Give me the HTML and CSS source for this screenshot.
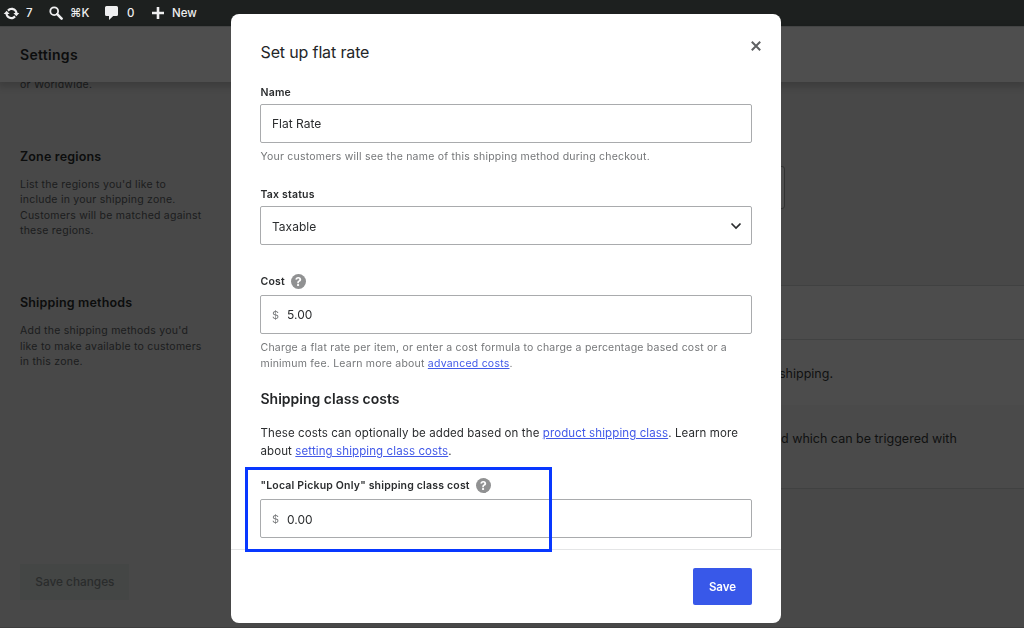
FILE: index.html
```html
<!DOCTYPE html>
<html lang="en">
<head>
<meta charset="utf-8">
<title>Settings</title>
<link rel="stylesheet" href="styles.css">
</head>
<body>
<div class="page">
  <nav class="adminbar">
    <span class="bar-item updates"><svg width="17" height="17" viewBox="0 0 20 20"><path fill="currentColor" d="M10.2 3.28c3.53 0 6.43 2.61 6.92 6h2.08l-3.5 4-3.5-4h2.32c-.45-1.97-2.21-3.45-4.32-3.45-1.45 0-2.73.71-3.54 1.78L4.95 5.66C6.23 4.2 8.11 3.28 10.2 3.28zm-.4 13.44c-3.52 0-6.43-2.61-6.92-6H.8l3.5-4 3.5 4H5.48c.45 1.97 2.21 3.45 4.32 3.45 1.45 0 2.73-.71 3.54-1.78l1.71 1.95c-1.28 1.46-3.15 2.38-5.25 2.38z"/></svg><span>7</span></span>
    <span class="bar-item search"><svg width="14" height="14" viewBox="0 0 14 14" fill="none" stroke="currentColor"><circle cx="5.2" cy="5.2" r="3.9" stroke-width="1.8"/><path d="M8.2 8.2l4.4 4.4" stroke-width="2.6" stroke-linecap="round"/></svg><span class="keys">⌘K</span></span>
    <span class="bar-item comments"><svg width="13" height="14" viewBox="0 0 13 14"><path d="M1.5 0h10Q13 0 13 1.5v7Q13 10 11.500 10H8.200L4 14v-4H1.500Q0 10 0 8.500v-7Q0 0 1.500 0z" fill="currentColor"/></svg><span>0</span></span>
    <span class="bar-item new"><svg width="12" height="12" viewBox="0 0 12 12"><path d="M6 0v12M0 6h12" stroke="currentColor" stroke-width="2.600"/></svg><span>New</span></span>
  </nav>
  <header class="page-header"><h1>Settings</h1></header>
  <main class="content">
    <aside class="side">
      <p class="side-text">or Worldwide.</p>
      <h2 class="zone-title">Zone regions</h2>
      <p class="side-text">List the regions you'd like to<br>include in your shipping zone.<br>Customers will be matched against<br>these regions.</p>
      <h2 class="methods-title">Shipping methods</h2>
      <p class="side-text">Add the shipping methods you'd<br>like to make available to customers<br>in this zone.</p>
      <button class="save-changes">Save changes</button>
    </aside>
    <section class="settings">
      <div class="region-picker"></div>
      <div class="methods-table">
        <div class="table-head"></div>
        <div class="table-row flat">shipping.</div>
        <div class="table-row free">d which can be triggered with</div>
      </div>
    </section>
  </main>
</div>

<div class="modal">
  <div class="modal-header">
    <h2>Set up flat rate</h2>
    <svg class="close" width="10" height="10" viewBox="0 0 10 10"><path d="M.8.8l8.400 8.400M9.200.8L.8 9.200" stroke="currentColor" stroke-width="2"/></svg>
  </div>
  <div class="modal-body">
    <label class="label"><span>Name</span></label>
    <div class="field name-field">Flat Rate</div>
    <p class="help">Your customers will see the name of this shipping method during checkout.</p>
    <label class="label tax-label"><span>Tax status</span></label>
    <div class="field select-field"><span>Taxable</span><svg width="12" height="8" viewBox="0 0 12 8"><path d="M1.500 1.500L6 6l4.500-4.500" fill="none" stroke="currentColor" stroke-width="1.700"/></svg></div>
    <label class="label cost-label"><span>Cost</span><span class="tip">?</span></label>
    <div class="field cost-field"><span class="currency">$</span>5.00</div>
    <p class="help cost-help">Charge a flat rate per item, or enter a cost formula to charge a percentage based cost or a<br>minimum fee. Learn more about <a>advanced costs</a>.</p>
    <h3>Shipping class costs</h3>
    <p class="intro">These costs can optionally be added based on the <a>product shipping class</a>. Learn more<br>about <a>setting shipping class costs</a>.</p>
    <label class="label class-label"><span>"Local Pickup Only" shipping class cost</span><span class="tip">?</span></label>
    <div class="field class-field"><span class="currency">$</span>0.00</div>
  </div>
  <div class="modal-footer"><button class="save">Save</button></div>
  <div class="highlight"></div>
</div>
</body>
</html>
```
FILE: styles.css
```css
* { box-sizing: border-box; }
body { margin: 0; font-family: Inter, "Noto Sans", sans-serif; overflow: hidden; }
h1, h2, h3, p { margin: 0; }
svg { display: block; flex: none; }
button { font-family: inherit; border: 0; padding: 0; }

.page { height: 628px; display: flex; flex-direction: column; background: #484848; border-bottom: 1px solid #3e3e3e; }
.adminbar { height: 26px; flex: none; display: flex; align-items: center; background: #1d201f; color: #efeff0; font-size: 11.5px; font-weight: 500; padding-left: 3px; }
.bar-item { display: flex; align-items: center; }
.updates { width: 46px; gap: 6px; }
.search { width: 56px; gap: 7px; }
.keys { font-size: 11.5px; }
.comments { width: 47px; gap: 9px; }
.new { gap: 8px; }
.page-header { height: 56px; flex: none; display: flex; align-items: center; padding-left: 20px; background: #4e4e4e; box-shadow: 0 3px 7px 2px rgba(0, 0, 0, .16); position: relative; border-top: 1px solid #434444; }
h1 { font-size: 14px; font-weight: 600; color: #0c0d0d; letter-spacing: .3px; }
.content { flex: 1; display: flex; min-height: 0; }
.side { width: 231px; flex: none; padding-left: 20px; margin-top: -5px; }
.side-text { font-size: 10.5px; line-height: 15.600px; color: #1b1c1d; letter-spacing: .24px; white-space: nowrap; }
.side h2 { font-size: 12.500px; line-height: 18px; font-weight: 600; color: #0c0d0d; letter-spacing: .17px; }
.side .zone-title { margin: 55px 0 11px; }
.side .methods-title { margin: 55px 0 11px; }
.save-changes { width: 109px; height: 36px; margin: 194px 0 0 .4px; background: #444645; color: #2a2c2c; font-size: 11.800px; font-weight: 500; }

.settings { flex: 1; padding-top: 84px; }
.region-picker { width: 554px; height: 43px; border: 1px solid #323333; border-radius: 3px; background: #4e4e4e; }
.methods-table { margin-top: 76px; border: solid #404141; border-width: 1px 0; background: #4c4c4c; }
.table-head { height: 54px; border-bottom: 1px solid #414242; }
.table-row { font-size: 12.500px; color: #101111; white-space: nowrap; display: flex; align-items: center; }
.flat { height: 65px; padding: 2px 0 0 548px; }
.free { height: 83px; padding: 0 0 17px 550px; background: #4a4a4a; }

.modal { position: fixed; left: 231px; top: 14px; width: 550px; height: 609px; border-radius: 8px; background: #fff; display: flex; flex-direction: column; color: #2b2d2f; }
.modal-header { height: 70px; flex: none; display: flex; justify-content: space-between; padding: 27px 20px 0 29.500px; }
.modal-header h2 { font-size: 16px; line-height: 22px; font-weight: 400; color: #242628; letter-spacing: -.14px; }
.close { color: #5e6062; }
.modal-body { height: 465px; flex: none; padding: 0 29px; }
.modal-body > * { white-space: nowrap; }
.label { height: 16px; display: flex; align-items: center; font-size: 10.500px; font-weight: 600; letter-spacing: .19px; padding-left: .5px; gap: 6px; }
.tip { width: 15px; height: 15px; border-radius: 50%; background: #909192; color: #fff; display: grid; place-items: center; font-size: 12px; font-weight: 700; letter-spacing: 0; }
.field { height: 39px; border: 1px solid #a9abad; border-radius: 2px; display: flex; align-items: center; padding: 0 11px; font-size: 12px; color: #2b2d2f; }
.name-field { margin-top: 4px; }
.help { margin-top: 6px; font-size: 10.500px; line-height: 16px; color: #747678; padding-left: .5px; letter-spacing: .22px; }
.tax-label { margin-top: 21px; }
.select-field { height: 39px; margin-top: 4px; padding: 1px 9px 0 11px; justify-content: space-between; }
.cost-label { margin-top: 28px; }
.cost-field { margin-top: 6px; }
.currency { color: #7b7d7f; width: 15px; font-size: 11px; }
.cost-help { line-height: 15.500px; }
h3 { margin-top: 18px; font-size: 14px; line-height: 20px; font-weight: 600; color: #242628; padding-left: .5px; }
.intro { margin-top: 15px; font-size: 11.500px; line-height: 18px; padding-left: .5px; letter-spacing: .105px; }
a { color: #4259e8; text-decoration: underline; text-underline-offset: 1px; }
.class-label { margin-top: 17px; }
.class-field { margin-top: 6px; padding-top: 1px; }
.modal-footer { flex: 1; border-top: 1px solid #e4e5e6; display: flex; align-items: center; justify-content: flex-end; padding-right: 29px; }
.save { width: 59px; height: 37px; border-radius: 2px; background: #3858e9; color: #fff; font-size: 11.500px; font-weight: 600; }
.highlight { position: absolute; left: 14px; top: 453px; width: 307px; height: 85px; border: 3px solid #0838ff; }
```
